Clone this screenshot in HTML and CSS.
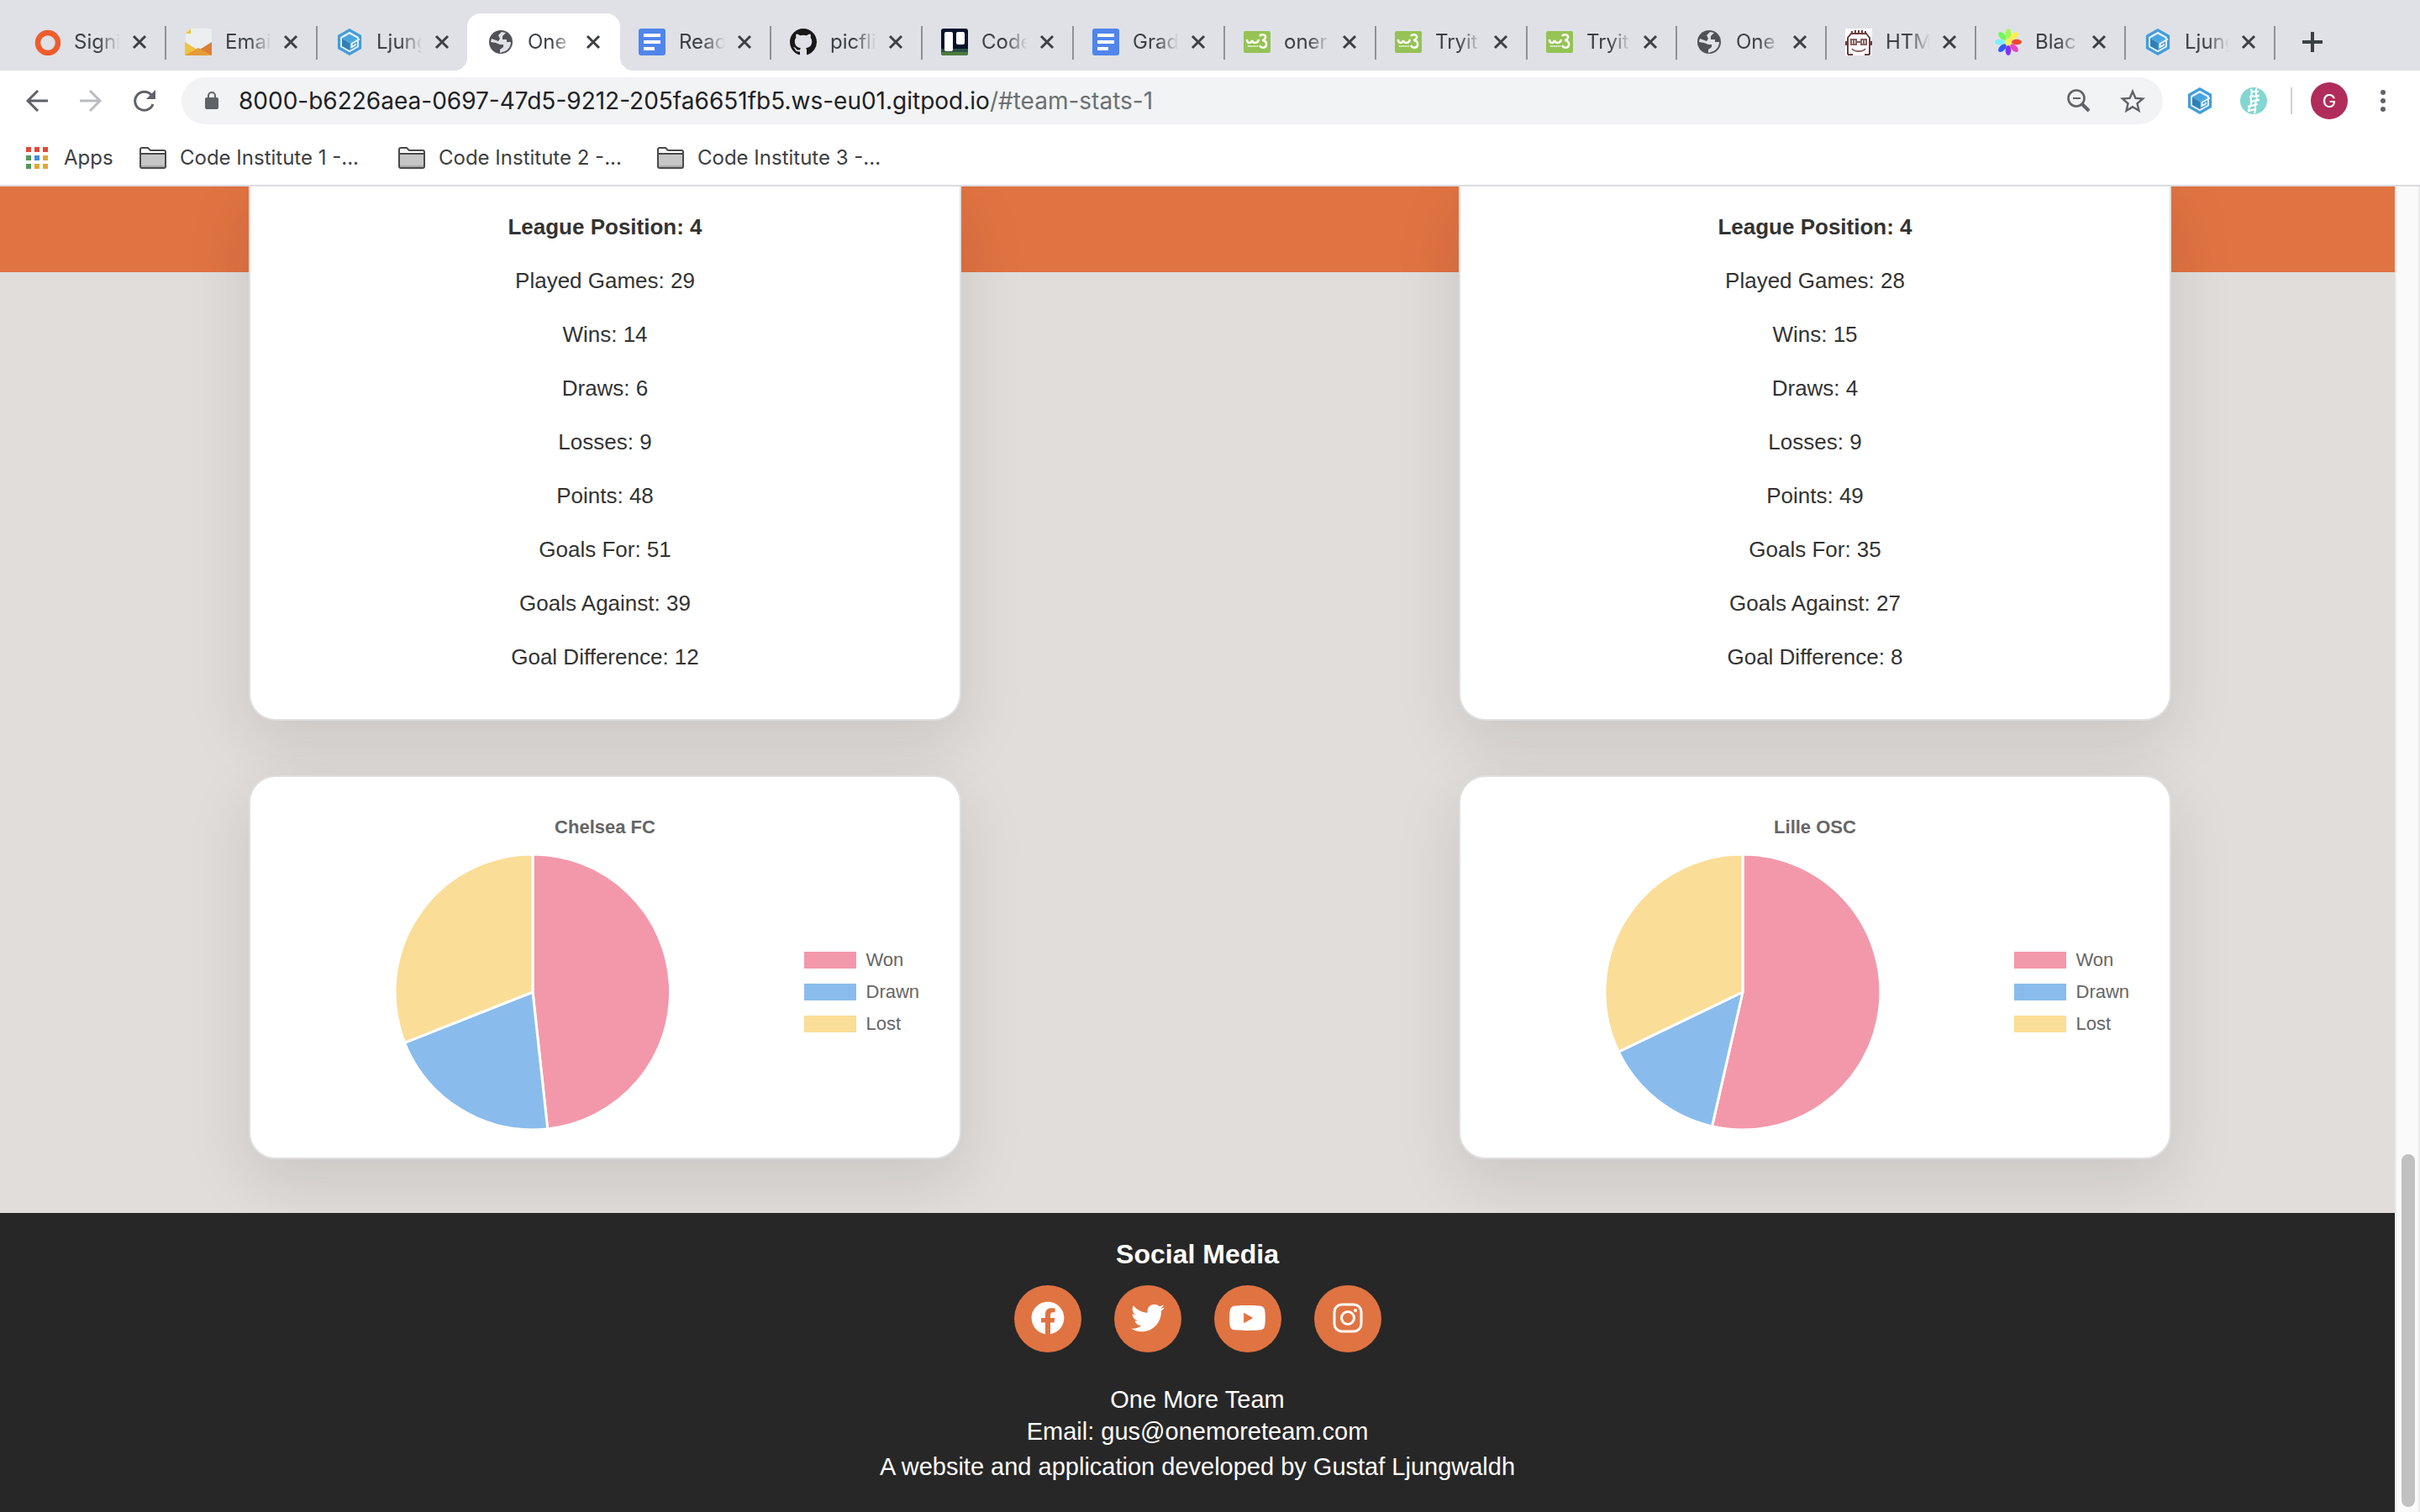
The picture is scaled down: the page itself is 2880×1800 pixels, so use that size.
FILE: index.html
```html
<!DOCTYPE html>
<html lang="en">
<head>
<meta charset="utf-8">
<title>One More Team</title>
<link rel="stylesheet" href="styles.css">
</head>
<body>
<svg class="defs" aria-hidden="true">
  <symbol id="close" viewBox="0 0 18 18"><path d="M2 2l14 14M16 2L2 16" stroke="#3c4043" stroke-width="3" fill="none"/></symbol>
  <symbol id="ring" viewBox="0 0 32 32"><circle cx="17" cy="17" r="12" fill="none" stroke="#f05c2d" stroke-width="6.500"/></symbol>
  <symbol id="mail" viewBox="0 0 32 32"><path d="M6 0h26v18L16 26 1 16V6z" fill="#eceff0"/><path d="M1 6l6-6v6z" fill="#f5c62b"/><path d="M0 16l16 10L0 32z" fill="#efc341"/><path d="M32 16L16 26l16 6z" fill="#d97f35"/><path d="M0 32l16-9 16 9z" fill="#e79a36"/></symbol>
  <symbol id="gitpod" viewBox="0 0 32 32"><path d="M16 1.800L28.500 9v14L16 30.200 3.500 23V9z" fill="#e9f3fa" stroke="#439dd8" stroke-width="3.200"/><path d="M16 6.500l9 5-9 5.500-9-5.500z" fill="#4aa5df"/><path d="M7 11.500l9 5.500v9l-9-5z" fill="#3180b4"/><path d="M16 17l9-5.500v9.500l-9 5z" fill="#439dd8"/><path d="M28 12.500L18.500 18v4l4.500-2.500v-1.500" fill="none" stroke="#f4f9fc" stroke-width="2"/></symbol>
  <symbol id="globe" viewBox="0 0 32 32"><circle cx="16" cy="16" r="14" fill="#505257"/><path d="M17 4l5 1-4 4v4h5v3h5c0 5-3 9-7 11l-6 2v-4l4-3v-3h-4l-5-2-6-1c0-2 1-3 1-4l8 3 2-3-2-4z" fill="#dfe1e6" class="land"/></symbol>
  <symbol id="docs" viewBox="0 0 32 32"><rect width="32" height="32" rx="3" fill="#5085ec"/><path d="M6 8h20M6 16h20M6 24h13" stroke="#fff" stroke-width="4"/></symbol>
  <symbol id="github" viewBox="0 0 16 16"><path fill="#191717" d="M8 0C3.580 0 0 3.580 0 8c0 3.540 2.290 6.530 5.470 7.590.4.070.55-.17.55-.38 0-.19-.01-.82-.01-1.490-2.010.37-2.530-.49-2.690-.94-.09-.23-.48-.94-.82-1.130-.28-.15-.68-.52-.01-.53.63-.01 1.080.58 1.230.82.72 1.210 1.870.87 2.330.66.07-.52.28-.87.51-1.070-1.780-.2-3.640-.89-3.640-3.950 0-.87.31-1.590.82-2.150-.08-.2-.36-1.020.08-2.120 0 0 .67-.21 2.200.82.64-.18 1.320-.27 2-.27s1.360.09 2 .27c1.530-1.040 2.200-.82 2.200-.82.44 1.100.16 1.920.08 2.120.51.56.82 1.270.82 2.150 0 3.070-1.870 3.750-3.650 3.950.29.25.54.73.54 1.480 0 1.070-.01 1.930-.01 2.200 0 .21.15.46.55.38A8.010 8.010 0 0016 8c0-4.420-3.580-8-8-8z"/></symbol>
  <symbol id="trello" viewBox="0 0 32 32"><rect width="32" height="32" rx="3" fill="#07122b"/><path d="M0 24h32v5H0z" fill="#2c5145"/><path d="M0 28h32v1a3 3 0 0 1-3 3H3a3 3 0 0 1-3-3z" fill="#4d7a3f"/><rect x="4" y="4" width="10" height="23" rx="2" fill="#fff"/><rect x="18" y="4" width="10" height="15" rx="2" fill="#fff"/></symbol>
  <symbol id="w3" viewBox="0 0 32 32"><rect y="3" width="32" height="26" rx="2" fill="#95c355"/><path d="M4 13c0 5 5 5 6 1 1 4 7 4 8-1M19 9c2-3 8-2 7 2-1 2-3 3-4 3 3 0 6 2 5 6-1 3-6 4-8 0" fill="none" stroke="#fff" stroke-width="2.500"/><path d="M5 21h12" stroke="#fff" stroke-width="2" stroke-dasharray="1.500 .7" opacity=".8"/></symbol>
  <symbol id="face" viewBox="0 0 32 32"><rect width="32" height="32" fill="#fff"/><path d="M3 31V11l4-5h18l4 5v20M8 6V3m4 3V2m4 4V2m4 4V2m4 4V3M1 15v5m30-5v5M3 31h6m14 0h6" fill="none" stroke="#6b3d3d" stroke-width="2"/><path d="M7 13h6v6H7zm12 0h6v6h-6zm-6 3h6M8 24c3 4 13 4 16 0M10 13v6m12-6v6" fill="none" stroke="#8a6262" stroke-width="2"/></symbol>
  <symbol id="flower" viewBox="0 0 32 32"><ellipse cx="16" cy="6" rx="3.300" ry="6" fill="#a2fa4f"/><ellipse cx="16" cy="6" rx="3.300" ry="6" fill="#fff04d" transform="rotate(45 16 16)"/><ellipse cx="16" cy="6" rx="3.300" ry="6" fill="#ee4630" transform="rotate(90 16 16)"/><ellipse cx="16" cy="6" rx="3.300" ry="6" fill="#ee43bd" transform="rotate(135 16 16)"/><ellipse cx="16" cy="6" rx="3.300" ry="6" fill="#8230f5" transform="rotate(180 16 16)"/><ellipse cx="16" cy="6" rx="3.300" ry="6" fill="#2f5bfa" transform="rotate(225 16 16)"/><ellipse cx="16" cy="6" rx="3.300" ry="6" fill="#74f2fd" transform="rotate(270 16 16)"/><ellipse cx="16" cy="6" rx="3.300" ry="6" fill="#6ef95c" transform="rotate(315 16 16)"/><circle cx="16" cy="16" r="4" fill="#fff04d"/></symbol>
  <symbol id="folder" viewBox="0 0 32 26"><path d="M1 23V3q0-2 2-2h7l3 3h16q2 0 2 2v17q0 2-2 2H3q-2 0-2-2z" fill="#fff" stroke="#48494b" stroke-width="2"/><path d="M2 8h28v16H2z" fill="#c6c6c6"/><path d="M2 22h28v2H2z" fill="#a9a9a9"/><path d="M1 8h30" stroke="#48494b" stroke-width="2"/></symbol>
</svg>

<header class="browser">
  <nav class="tabs" aria-label="Tabs">
    <div class="tab"><svg class="fav"><use href="#ring"/></svg><span class="title">Signi</span><button class="x" aria-label="Close"><svg><use href="#close"/></svg></button></div>
    <div class="tab"><svg class="fav"><use href="#mail"/></svg><span class="title">Emai</span><button class="x" aria-label="Close"><svg><use href="#close"/></svg></button></div>
    <div class="tab before"><svg class="fav"><use href="#gitpod"/></svg><span class="title">Ljung</span><button class="x" aria-label="Close"><svg><use href="#close"/></svg></button></div>
    <div class="tab active"><svg class="fav"><use href="#globe"/></svg><span class="title">One</span><button class="x" aria-label="Close"><svg><use href="#close"/></svg></button></div>
    <div class="tab"><svg class="fav"><use href="#docs"/></svg><span class="title">Read</span><button class="x" aria-label="Close"><svg><use href="#close"/></svg></button></div>
    <div class="tab"><svg class="fav"><use href="#github"/></svg><span class="title">picfli</span><button class="x" aria-label="Close"><svg><use href="#close"/></svg></button></div>
    <div class="tab"><svg class="fav"><use href="#trello"/></svg><span class="title">Code</span><button class="x" aria-label="Close"><svg><use href="#close"/></svg></button></div>
    <div class="tab"><svg class="fav"><use href="#docs"/></svg><span class="title">Grad</span><button class="x" aria-label="Close"><svg><use href="#close"/></svg></button></div>
    <div class="tab"><svg class="fav"><use href="#w3"/></svg><span class="title">oner</span><button class="x" aria-label="Close"><svg><use href="#close"/></svg></button></div>
    <div class="tab"><svg class="fav"><use href="#w3"/></svg><span class="title">Tryit</span><button class="x" aria-label="Close"><svg><use href="#close"/></svg></button></div>
    <div class="tab"><svg class="fav"><use href="#w3"/></svg><span class="title">Tryit</span><button class="x" aria-label="Close"><svg><use href="#close"/></svg></button></div>
    <div class="tab"><svg class="fav"><use href="#globe"/></svg><span class="title">One</span><button class="x" aria-label="Close"><svg><use href="#close"/></svg></button></div>
    <div class="tab"><svg class="fav"><use href="#face"/></svg><span class="title">HTM</span><button class="x" aria-label="Close"><svg><use href="#close"/></svg></button></div>
    <div class="tab"><svg class="fav"><use href="#flower"/></svg><span class="title">Blac</span><button class="x" aria-label="Close"><svg><use href="#close"/></svg></button></div>
    <div class="tab"><svg class="fav"><use href="#gitpod"/></svg><span class="title">Ljung</span><button class="x" aria-label="Close"><svg><use href="#close"/></svg></button></div>
    <button class="new-tab" aria-label="New tab"><svg viewBox="0 0 24 24"><path d="M12 0v24M0 12h24" stroke="#3c4043" stroke-width="4"/></svg></button>
  </nav>

  <div class="toolbar">
    <div class="nav-buttons">
      <button aria-label="Back"><svg viewBox="0 0 26 26"><path d="M26 13H2M14 1L2 13l12 12" fill="none" stroke="#5f6368" stroke-width="3"/></svg></button>
      <button aria-label="Forward"><svg viewBox="0 0 26 26"><path d="M0 13h24M12 1l12 12-12 12" fill="none" stroke="#babcbe" stroke-width="3"/></svg></button>
      <button aria-label="Reload"><svg viewBox="0 0 26 26"><path d="M23 17a11 11 0 1 1-2-11" fill="none" stroke="#5f6368" stroke-width="3"/><path d="M26 0v11H15z" fill="#5f6368"/></svg></button>
    </div>
    <div class="omnibox">
      <svg class="lock" viewBox="0 0 16 22"><path d="M4 8V5a4 4 0 0 1 8 0v3" fill="none" stroke="#5f6368" stroke-width="2"/><rect y="7" width="16" height="14" rx="2" fill="#5f6368"/></svg>
      <div class="url" role="textbox" aria-label="Address">8000-b6226aea-0697-47d5-9212-205fa6651fb5.ws-eu01.gitpod.io<span>/#team-stats-1</span></div>
      <button aria-label="Zoom"><svg viewBox="0 0 30 30"><circle cx="12" cy="12" r="9.500" fill="none" stroke="#5f6368" stroke-width="2.600"/><path d="M8 12h9" stroke="#5f6368" stroke-width="2"/><path d="M19 19l8 8" stroke="#5f6368" stroke-width="4"/></svg></button>
      <button aria-label="Bookmark"><svg viewBox="2 1.500 20 20"><path fill="#5f6368" d="M22 9.240l-7.190-.62L12 2 9.190 8.630 2 9.240l5.460 4.730L5.820 21 12 17.270 18.180 21l-1.630-7.030L22 9.240zM12 15.400l-3.760 2.270 1-4.280-3.320-2.880 4.380-.38L12 6.100l1.710 4.040 4.380.38-3.320 2.880 1 4.280L12 15.400z"/></svg></button>
    </div>
    <div class="extensions">
      <svg viewBox="0 0 32 32"><use href="#gitpod"/></svg>
      <svg viewBox="0 0 32 32"><circle cx="16" cy="16" r="16" fill="#84d6d0"/><path d="M20 1c-4 5 2 9-1 15s1 9-2 15M13 2c3 6-2 8 0 14s-5 8-2 13M13 5h9M11 11l12-1M12 17l11-2M9 23l12-3M9 28l10-2" stroke="#fff" stroke-width="2.200" fill="none"/></svg>
      <i class="rule"></i>
      <button class="avatar">G</button>
      <button class="dots" aria-label="Menu"><svg viewBox="0 0 6 26"><circle cx="3" cy="3" r="3"/><circle cx="3" cy="13" r="3"/><circle cx="3" cy="23" r="3"/></svg></button>
    </div>
  </div>

  <nav class="bookmarks" aria-label="Bookmarks">
    <a href="#apps" class="apps"><svg viewBox="0 0 26 26"><path d="M0 0h6v6H0zM10 0h6v6h-6zM20 0h6v6h-6z" fill="#e2493b"/><path d="M0 10h6v6H0zM0 20h6v6H0z" fill="#52985a"/><path d="M10 10h6v6h-6z" fill="#4486f0"/><path d="M20 10h6v6h-6zM10 20h6v6h-6zM20 20h6v6h-6z" fill="#e3a537"/></svg>Apps</a>
    <a href="#ci1" class="folder"><svg><use href="#folder"/></svg>Code Institute 1 -...</a>
    <a href="#ci2" class="folder"><svg><use href="#folder"/></svg>Code Institute 2 -...</a>
    <a href="#ci3" class="folder"><svg><use href="#folder"/></svg>Code Institute 3 -...</a>
  </nav>
</header>

<div class="viewport">
  <div class="page">
    <main class="teams">
      <section class="team">
        <div class="card stats">
          <p class="lead">League Position: 4</p>
          <p>Played Games: 29</p>
          <p>Wins: 14</p>
          <p>Draws: 6</p>
          <p>Losses: 9</p>
          <p>Points: 48</p>
          <p>Goals For: 51</p>
          <p>Goals Against: 39</p>
          <p>Goal Difference: 12</p>
        </div>
        <div class="card chart">
          <h3>Chelsea FC</h3>
          <div class="plot">
            <svg class="pie" viewBox="-164 -164 328 328" role="img" aria-label="Chelsea FC results">
              <path class="won" d="M0 0V-164A164 164 0 0 1 17.700 163Z"/>
              <path class="drawn" d="M0 0L17.700 163A164 164 0 0 1 -152.500 60.300Z"/>
              <path class="lost" d="M0 0L-152.500 60.300A164 164 0 0 1 0 -164Z"/>
            </svg>
            <ul class="legend"><li class="l-won">Won</li><li class="l-drawn">Drawn</li><li class="l-lost">Lost</li></ul>
          </div>
        </div>
      </section>
      <section class="team">
        <div class="card stats">
          <p class="lead">League Position: 4</p>
          <p>Played Games: 28</p>
          <p>Wins: 15</p>
          <p>Draws: 4</p>
          <p>Losses: 9</p>
          <p>Points: 49</p>
          <p>Goals For: 35</p>
          <p>Goals Against: 27</p>
          <p>Goal Difference: 8</p>
        </div>
        <div class="card chart">
          <h3>Lille OSC</h3>
          <div class="plot">
            <svg class="pie" viewBox="-164 -164 328 328" role="img" aria-label="Lille OSC results">
              <path class="won" d="M0 0V-164A164 164 0 1 1 -36.500 159.900Z"/>
              <path class="drawn" d="M0 0L-36.500 159.900A164 164 0 0 1 -147.800 71.200Z"/>
              <path class="lost" d="M0 0L-147.800 71.200A164 164 0 0 1 0 -164Z"/>
            </svg>
            <ul class="legend"><li class="l-won">Won</li><li class="l-drawn">Drawn</li><li class="l-lost">Lost</li></ul>
          </div>
        </div>
      </section>
    </main>
    <footer class="footer">
      <h2>Social Media</h2>
      <div class="social">
        <a href="#facebook" aria-label="Facebook"><svg viewBox="0 0 512 512"><path d="M504 256C504 119 393 8 256 8S8 119 8 256c0 123.780 90.690 226.380 209.250 245V327.690h-63V256h63v-54.640c0-62.150 37-96.480 93.670-96.480 27.140 0 55.520 4.840 55.520 4.840v61h-31.280c-30.800 0-40.410 19.120-40.410 38.730V256h68.780l-11 71.690h-57.780V501C413.310 482.380 504 379.780 504 256z"/></svg></a>
        <a href="#twitter" aria-label="Twitter"><svg viewBox="0 0 512 512"><path d="M459.370 151.716c.325 4.548.325 9.097.325 13.645 0 138.720-105.583 298.558-298.558 298.558-59.452 0-114.680-17.219-161.137-47.106 8.447.974 16.568 1.299 25.340 1.299 49.055 0 94.213-16.568 130.274-44.832-46.132-.975-84.792-31.188-98.112-72.772 6.498.974 12.995 1.624 19.818 1.624 9.421 0 18.843-1.300 27.614-3.573-48.081-9.747-84.143-51.980-84.143-102.985v-1.299c13.969 7.797 30.214 12.670 47.431 13.319-28.264-18.843-46.781-51.005-46.781-87.391 0-19.492 5.197-37.360 14.294-52.954 51.655 63.675 129.300 105.258 216.365 109.807-1.624-7.797-2.599-15.918-2.599-24.040 0-57.828 46.782-104.934 104.934-104.934 30.213 0 57.502 12.670 76.670 33.137 23.715-4.548 46.456-13.320 66.599-25.340-7.798 24.366-24.366 44.833-46.132 57.827 21.117-2.273 41.584-8.122 60.426-16.243-14.292 20.791-32.161 39.308-52.628 54.253z"/></svg></a>
        <a href="#youtube" aria-label="YouTube"><svg class="wide" viewBox="0 0 576 512"><path d="M549.655 124.083c-6.281-23.650-24.787-42.276-48.284-48.597C458.781 64 288 64 288 64S117.220 64 74.629 75.486c-23.497 6.322-42.003 24.947-48.284 48.597-11.412 42.867-11.412 132.305-11.412 132.305s0 89.438 11.412 132.305c6.281 23.650 24.787 41.500 48.284 47.821C117.220 448 288 448 288 448s170.780 0 213.371-11.486c23.497-6.321 42.003-24.171 48.284-47.821 11.412-42.867 11.412-132.305 11.412-132.305s0-89.438-11.412-132.305zm-317.510 213.508V175.185l142.739 81.205-142.739 81.201z"/></svg></a>
        <a href="#instagram" aria-label="Instagram"><svg viewBox="0 0 40 40"><rect x="4" y="4" width="32" height="32" rx="9" fill="none" stroke="#fff" stroke-width="3"/><circle cx="20" cy="20" r="7.500" fill="none" stroke="#fff" stroke-width="3"/><circle cx="29" cy="11" r="2"/></svg></a>
      </div>
      <p>One More Team</p>
      <p>Email: gus@onemoreteam.com</p>
      <p class="credit">A website and application developed by Gustaf Ljungwaldh</p>
    </footer>
  </div>
  <div class="scrollbar"><div class="thumb"></div></div>
</div>
</body>
</html>
```
FILE: styles.css
```css
* { box-sizing: border-box; }
body { margin: 0; min-height: 100vh; display: flex; flex-direction: column; background: #fff; font-family: "Liberation Sans", Arial, sans-serif; overflow: hidden; }
button { border: 0; padding: 0; background: none; font: inherit; display: flex; align-items: center; justify-content: center; }
svg { display: block; flex: none; }
p, h2, h3, ul { margin: 0; padding: 0; }
.defs { position: absolute; width: 0; height: 0; }

/* Browser chrome */
.browser { font-family: Inter, sans-serif; color: #3c4043; border-bottom: 2px solid #dadce0; }
.tabs { display: flex; align-items: flex-end; height: 84px; padding-left: 18px; background: #dfe1e6; }
.tab { position: relative; display: flex; align-items: center; width: 180px; height: 68px; padding: 0 23px 0 22px; font-size: 24px; line-height: 32px; }
.tab:nth-child(n+11) { width: 178px; }
.tab::after { content: ""; position: absolute; right: 0; top: 15px; width: 2px; height: 40px; background: #8f9195; }
.tab.before::after, .tab.active::after { display: none; }
.fav { width: 32px; height: 32px; }
.title { flex: 1; min-width: 0; margin: 0 12px 0 16px; overflow: hidden; white-space: nowrap; mask-image: linear-gradient(90deg, #000 50%, transparent 96%); }
.x svg { width: 18px; height: 18px; }
.active { width: 182px; margin-left: -2px; padding-left: 24px; background: #fff; border-radius: 16px 16px 0 0; }
.active .land { fill: #fff; }
.active::before { content: ""; position: absolute; bottom: 0; left: -16px; right: -16px; height: 16px; background: radial-gradient(circle at 0 0, transparent 16px, #fff 16px) left / 16px 16px no-repeat, radial-gradient(circle at 100% 0, transparent 16px, #fff 16px) right / 16px 16px no-repeat; }
.new-tab { width: 24px; height: 68px; margin-left: 32px; }
.new-tab svg { width: 24px; height: 24px; }

.toolbar { display: flex; align-items: center; height: 72px; padding: 0 41px 0 31px; }
.nav-buttons { display: flex; gap: 38px; width: 185px; }
.nav-buttons svg { width: 26px; height: 26px; }
.omnibox { flex: 1; display: flex; align-items: center; height: 56px; padding: 0 21px 0 28px; border-radius: 28px; background: #f1f3f4; }
.lock { width: 16px; height: 22px; }
.url { flex: 1; margin-left: 24px; font-size: 28px; line-height: 40px; color: #202124; white-space: nowrap; }
.url span { color: #6c6f73; }
.omnibox button { margin-left: 34px; }
.omnibox button svg { width: 30px; height: 30px; }
.extensions { display: flex; align-items: center; margin-left: 28px; }
.extensions > svg { width: 32px; height: 32px; margin-right: 30px; }
.extensions > svg + svg { margin: 0 28px 0 2px; }
.rule { width: 2px; height: 32px; background: #cfd1d4; margin-right: 22px; }
.avatar { width: 44px; height: 44px; border-radius: 50%; background: #b02c5a; color: #fff; font-size: 22px; }
.dots { margin-left: 39px; }
.dots svg { width: 6px; height: 26px; fill: #5f6368; }

.bookmarks { display: flex; align-items: center; height: 64px; padding: 0 0 1px 31px; font-size: 24px; }
.bookmarks a { display: flex; align-items: center; color: inherit; text-decoration: none; }
.apps { width: 135px; gap: 19px; }
.apps svg { width: 26px; height: 26px; }
.folder { width: 308px; gap: 16px; }
.folder svg { width: 32px; height: 26px; }

/* Page */
.viewport { flex: 1; display: flex; }
.page { flex: 1; min-width: 0; display: flex; flex-direction: column; overflow: hidden; background: #e0ddda; color: #333; }
.teams { width: 100vw; display: grid; grid-template-columns: 1fr 1fr; padding-bottom: 64px; background: linear-gradient(#e07342, #e07342) top / 100% 102px no-repeat; }
.team { display: flex; flex-direction: column; align-items: center; gap: 65px; }
.card { width: 58.9%; border: 2px solid #dfdfdf; border-radius: 32px; background: #fff; box-shadow: 0 26px 77px rgba(20, 15, 30, .115); }
.stats { display: flex; flex-direction: column; gap: 26px; padding: 29px 0 55px; border-top: 0; border-radius: 0 0 32px 32px; text-align: center; font-size: 26px; line-height: 38px; }
.stats .lead { font-weight: bold; }
.chart { padding: 44px 48px 33px 172px; color: #666; font-size: 22px; }
.chart h3 { margin: 0 0 16px -124px; font-size: 22px; line-height: 32px; text-align: center; }
.plot { display: flex; align-items: center; justify-content: space-between; }
.pie { width: 328px; height: 328px; stroke: #fff; stroke-width: 3px; stroke-linejoin: bevel; }
.won { fill: #f398aa; }
.drawn { fill: #89bcec; }
.lost { fill: #fadd97; }
.legend { display: grid; gap: 6px; list-style: none; line-height: 32px; }
.legend li { display: flex; align-items: center; gap: 12px; }
.legend li::before { content: ""; width: 62px; height: 20px; }
.l-won::before { background: #f398aa; }
.l-drawn::before { background: #89bcec; }
.l-lost::before { background: #fadd97; }

.footer { position: relative; flex: 1; padding-top: 30px; background: #272727; color: #fff; text-align: center; font-size: 29px; line-height: 38px; }
.footer h2 { font-size: 32px; line-height: 38px; }
.social { display: flex; justify-content: center; gap: 39px; margin: 18px 0 37px; }
.social a { display: flex; align-items: center; justify-content: center; width: 80px; height: 80px; padding-bottom: 2px; border-radius: 50%; background: #e07342; }
.social svg { width: 40px; height: 40px; fill: #fff; }
.social .wide { width: 45px; }
.credit { padding-top: 4px; }
.scrollbar { width: 30px; padding: 1152px 4px 6px 6px; border: 2px solid #ebebeb; border-width: 0 2px; background: #fafafa; display: flex; }
.thumb { flex: 1; border-radius: 8px; background: #c1c1c1; }
```
